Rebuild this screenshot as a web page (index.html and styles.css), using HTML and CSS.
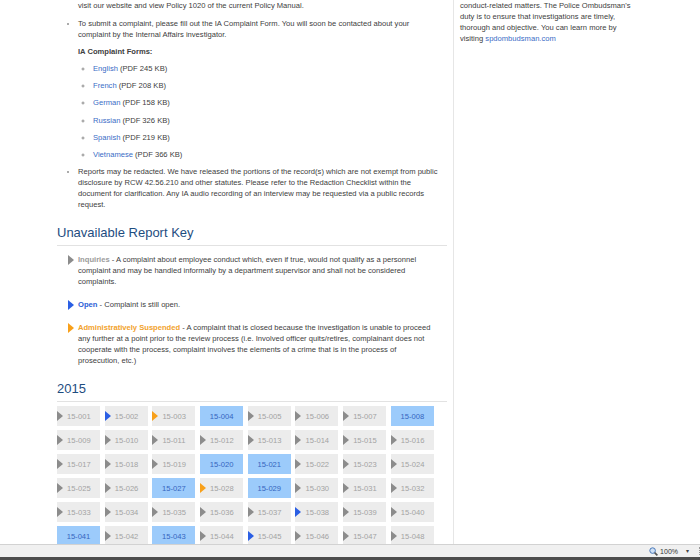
FILE: index.html
```html
<!DOCTYPE html>
<html lang="en">
<head>
    <meta charset="UTF-8">
    <title>Internal Affairs - Closed Case Summaries</title>
    <link rel="stylesheet" href="styles.css">
</head>
<body>
    <div class="page">
        <!-- Main column -->
        <div class="main">
            <p class="cont">visit our website and view Policy 1020 of the current Policy Manual.</p>
            <ul class="info">
                <li>To submit a complaint, please fill out the IA Complaint Form. You will soon be contacted about your complaint by the Internal Affairs investigator.
                    <p class="forms-title">IA Complaint Forms:</p>
                    <ul class="forms">
                        <li><a href="#">English</a> (PDF 245 KB)</li>
                        <li><a href="#">French</a> (PDF 208 KB)</li>
                        <li><a href="#">German</a> (PDF 158 KB)</li>
                        <li><a href="#">Russian</a> (PDF 326 KB)</li>
                        <li><a href="#">Spanish</a> (PDF 219 KB)</li>
                        <li><a href="#">Vietnamese</a> (PDF 366 KB)</li>
                    </ul>
                </li>
                <li>Reports may be redacted. We have released the portions of the record(s) which are not exempt from public disclosure by RCW 42.56.210 and other statutes. Please refer to the Redaction Checklist within the document for clarification. Any IA audio recording of an interview may be requested via a public records request.</li>
            </ul>

            <h2 class="section-title">Unavailable Report Key</h2>
            <div class="key">
                <div class="key-item">
                    <span class="tri tri-gray"></span>
                    <p><b class="lbl-inquiry">Inquiries</b> - A complaint about employee conduct which, even if true, would not qualify as a personnel complaint and may be handled informally by a department supervisor and shall not be considered complaints.</p>
                </div>
                <div class="key-item">
                    <span class="tri tri-blue"></span>
                    <p><b class="lbl-open">Open</b> - Complaint is still open.</p>
                </div>
                <div class="key-item">
                    <span class="tri tri-orange"></span>
                    <p><b class="lbl-susp">Administratively Suspended</b> - A complaint that is closed because the investigation is unable to proceed any further at a point prior to the review process (i.e. Involved officer quits/retires, complainant does not cooperate with the process, complaint involves the elements of a crime that is in the process of prosecution, etc.)</p>
                </div>
            </div>

            <h2 class="section-title year">2015</h2>
            <div class="reports">
                <span class="tile"><span class="tri tri-gray"></span>15-001</span>
                <span class="tile"><span class="tri tri-blue"></span>15-002</span>
                <span class="tile"><span class="tri tri-orange"></span>15-003</span>
                <a class="tile tile-link" href="#">15-004</a>
                <span class="tile"><span class="tri tri-gray"></span>15-005</span>
                <span class="tile"><span class="tri tri-gray"></span>15-006</span>
                <span class="tile"><span class="tri tri-gray"></span>15-007</span>
                <a class="tile tile-link" href="#">15-008</a>

                <span class="tile"><span class="tri tri-gray"></span>15-009</span>
                <span class="tile"><span class="tri tri-gray"></span>15-010</span>
                <span class="tile"><span class="tri tri-gray"></span>15-011</span>
                <span class="tile"><span class="tri tri-gray"></span>15-012</span>
                <span class="tile"><span class="tri tri-gray"></span>15-013</span>
                <span class="tile"><span class="tri tri-gray"></span>15-014</span>
                <span class="tile"><span class="tri tri-gray"></span>15-015</span>
                <span class="tile"><span class="tri tri-gray"></span>15-016</span>

                <span class="tile"><span class="tri tri-gray"></span>15-017</span>
                <span class="tile"><span class="tri tri-gray"></span>15-018</span>
                <span class="tile"><span class="tri tri-gray"></span>15-019</span>
                <a class="tile tile-link" href="#">15-020</a>
                <a class="tile tile-link" href="#">15-021</a>
                <span class="tile"><span class="tri tri-gray"></span>15-022</span>
                <span class="tile"><span class="tri tri-gray"></span>15-023</span>
                <span class="tile"><span class="tri tri-gray"></span>15-024</span>

                <span class="tile"><span class="tri tri-gray"></span>15-025</span>
                <span class="tile"><span class="tri tri-gray"></span>15-026</span>
                <a class="tile tile-link" href="#">15-027</a>
                <span class="tile"><span class="tri tri-orange"></span>15-028</span>
                <a class="tile tile-link" href="#">15-029</a>
                <span class="tile"><span class="tri tri-gray"></span>15-030</span>
                <span class="tile"><span class="tri tri-gray"></span>15-031</span>
                <span class="tile"><span class="tri tri-gray"></span>15-032</span>

                <span class="tile"><span class="tri tri-gray"></span>15-033</span>
                <span class="tile"><span class="tri tri-gray"></span>15-034</span>
                <span class="tile"><span class="tri tri-gray"></span>15-035</span>
                <span class="tile"><span class="tri tri-gray"></span>15-036</span>
                <span class="tile"><span class="tri tri-gray"></span>15-037</span>
                <span class="tile"><span class="tri tri-blue"></span>15-038</span>
                <span class="tile"><span class="tri tri-gray"></span>15-039</span>
                <span class="tile"><span class="tri tri-gray"></span>15-040</span>

                <a class="tile tile-link" href="#">15-041</a>
                <span class="tile"><span class="tri tri-gray"></span>15-042</span>
                <a class="tile tile-link" href="#">15-043</a>
                <span class="tile"><span class="tri tri-gray"></span>15-044</span>
                <span class="tile"><span class="tri tri-blue"></span>15-045</span>
                <span class="tile"><span class="tri tri-gray"></span>15-046</span>
                <span class="tile"><span class="tri tri-gray"></span>15-047</span>
                <span class="tile"><span class="tri tri-gray"></span>15-048</span>
            </div>
        </div>

        <!-- Sidebar -->
        <div class="side">
            <p>conduct-related matters. The Police Ombudsman's duty is to ensure that investigations are timely, thorough and objective. You can learn more by visiting <a href="#">spdombudsman.com</a></p>
        </div>
    </div>

    <!-- Browser status bar -->
    <div class="statusbar">
        <svg class="zoom-icon" width="9" height="9" viewBox="0 0 9 9">
            <circle cx="3.6" cy="3.6" r="2.8" fill="#cfe0f5" stroke="#4a78b8" stroke-width="1"/>
            <line x1="5.6" y1="5.6" x2="8.4" y2="8.4" stroke="#555" stroke-width="1.6"/>
        </svg>
        <span class="zoom-level">100%</span>
        <span class="zoom-arrow">&#9662;</span>
        <span class="grip"></span>
    </div>
</body>
</html>
```

FILE: styles.css
```css
html, body {
    margin: 0;
    padding: 0;
    height: 100%;
    overflow: hidden;
}

body {
    font-family: "Liberation Sans", Arial, sans-serif;
    font-size: 7.6px;
    line-height: 11px;
    color: #404040;
    background: #fff;
}

a {
    color: #3a6cc6;
    text-decoration: none;
}

p {
    margin: 0;
}

.page {
    display: flex;
    align-items: stretch;
    min-height: 100%;
}

/* main column */
.main {
    width: 390px;
    margin-left: 57px;
}

.cont {
    padding-left: 21px;
    margin-bottom: 7px;
}

.info {
    margin: 0 5px 0 0;
    padding-left: 21px;
}

.info li {
    margin-bottom: 6px;
}

.info li::marker {
    color: #8f8f8f;
}

.forms-title {
    font-weight: bold;
    margin: 6px 0;
}

.forms {
    margin: 0;
    padding-left: 15px;
}

.forms li {
    margin-bottom: 6.2px;
}

.section-title {
    margin: 15px 0 0;
    padding-bottom: 4px;
    border-bottom: 1px solid #e2e2e2;
    font-size: 13px;
    line-height: 16px;
    font-weight: normal;
    color: #1e4d7f;
}

.section-title.year {
    margin-top: 15px;
}

/* key */
.key {
    margin: 8px 8px 0 0;
}

.key-item {
    display: flex;
    align-items: flex-start;
    margin-bottom: 12px;
}

.key-item .tri {
    margin: 1px 4px 0 11px;
}

.key-item p {
    flex: 1;
}

.lbl-inquiry { color: #9b9b9b; }
.lbl-open { color: #2c60d6; }
.lbl-susp { color: #f2a22c; }

/* triangles */
.tri {
    flex: none;
    width: 0;
    height: 0;
    border-top: 5px solid transparent;
    border-bottom: 5px solid transparent;
    border-left: 6px solid #8c8c8c;
}

.tri-gray { border-left-color: #8c8c8c; }
.tri-blue { border-left-color: #2b5fe4; }
.tri-orange { border-left-color: #f8a01a; }

/* report tiles */
.reports {
    display: grid;
    grid-template-columns: repeat(8, 43px);
    grid-auto-rows: 20px;
    column-gap: 4.7px;
    row-gap: 4px;
    margin-top: 4px;
}

.tile {
    display: flex;
    align-items: center;
    background: #ececec;
    color: #a3a3a3;
}

.tile .tri {
    margin-right: 4px;
}

.tile-link {
    justify-content: center;
    background: #9ccbfb;
    color: #3565c0;
}

/* sidebar */
.side {
    width: 176px;
    margin-left: 6px;
    padding-left: 6px;
    border-left: 1px solid #e6e6e6;
}

/* browser status bar */
.statusbar {
    position: fixed;
    left: 0;
    right: 0;
    bottom: 0;
    height: 12px;
    display: flex;
    align-items: center;
    justify-content: flex-end;
    background: #f0f0f0;
    border-top: 1px solid #d2d2d2;
    border-bottom: 3px solid #4d4d4d;
    font-size: 7px;
    color: #333;
}

.zoom-icon {
    margin-right: 2px;
}

.zoom-level {
    margin-right: 8px;
}

.zoom-arrow {
    font-size: 6px;
    margin-right: 7px;
    color: #444;
}

.grip {
    width: 3px;
    height: 8px;
    border-right: 1px dotted #999;
    margin-right: 0;
}
```
